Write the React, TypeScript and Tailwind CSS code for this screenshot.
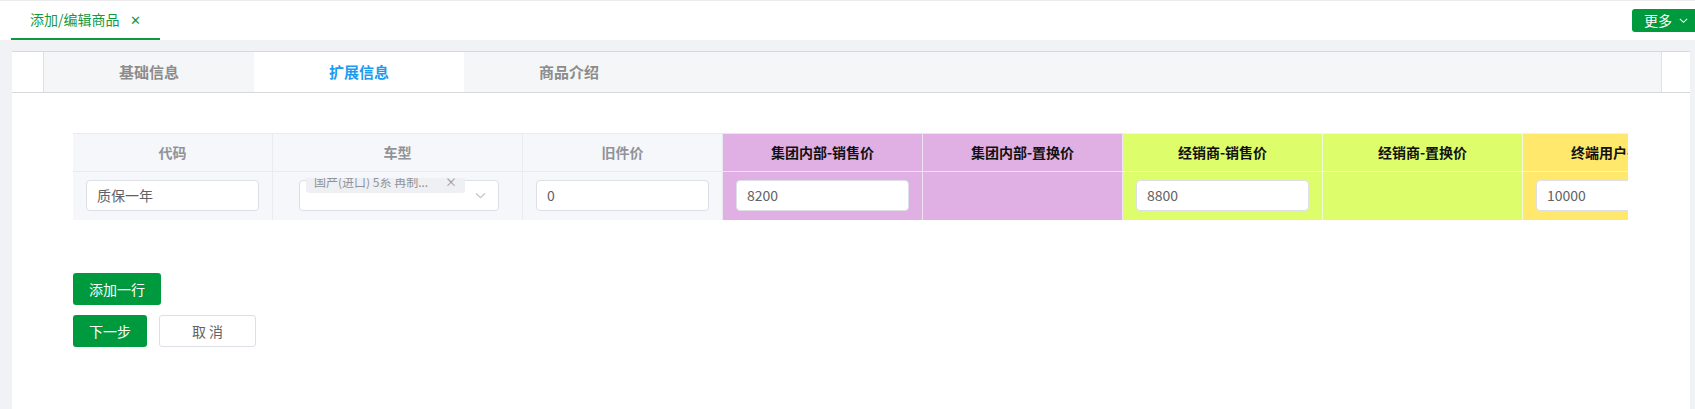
import React from "react";

const FONT = '"Noto Sans CJK SC", "Noto Sans", "Liberation Sans", sans-serif';

type Col = {
  label: string;
  width: string;
  tone: "gray" | "purple" | "lime" | "yellow";
  cell: React.ReactNode;
};

function TextInput({ value }: { value: string }) {
  return (
    <div className="h-[31px] w-full rounded-[4px] border border-[#dcdfe6] bg-white px-[10px] flex items-center text-[14px] text-[#606266]">
      {value}
    </div>
  );
}

function Chevron({ className }: { className: string }) {
  return (
    <svg viewBox="0 0 12 12" className={className} fill="none" stroke="currentColor" strokeWidth="1.1">
      <path d="M2 4.2 L6 8 L10 4.2" />
    </svg>
  );
}

function CarSelect() {
  return (
    <div className="relative h-[31px] w-[200px] ml-[26px]">
      <div className="h-full w-full rounded-[4px] border border-[#dcdfe6] bg-white flex items-center justify-end pr-[11px]">
        <Chevron className="w-[13px] h-[13px] text-[#c0c4cc]" />
      </div>
      <div className="absolute left-[7px] top-[-2px] h-[15px] w-[159px] overflow-hidden">
        <div className="-mt-[7px] h-[22px] w-[159px] rounded-[3px] bg-[#eef0f3] flex items-center pl-[8px] pr-[8px] text-[12px] text-[#909399]">
          <span className="flex-1 whitespace-nowrap">国产(进口) 5系 再制...</span>
          <span className="text-[12px] text-[#909399]">×</span>
        </div>
      </div>
    </div>
  );
}

const toneBg: Record<Col["tone"], string> = {
  gray: "bg-[#f5f7fa] border-[#e9ebf0]",
  purple: "bg-[#e0b0e4] border-[#f1e2f2]",
  lime: "bg-[#defd6b] border-[#f2fbd9]",
  yellow: "bg-[#ffe86b] border-[#fff3c4]",
};

export default function App() {
  const cols: Col[] = [
    { label: "代码", width: "w-[200px]", tone: "gray", cell: <div className="px-[13px] w-full"><TextInput value="质保一年" /></div> },
    { label: "车型", width: "w-[250px]", tone: "gray", cell: <CarSelect /> },
    { label: "旧件价", width: "w-[200px]", tone: "gray", cell: <div className="px-[13px] w-full"><TextInput value="0" /></div> },
    { label: "集团内部-销售价", width: "w-[200px]", tone: "purple", cell: <div className="px-[13px] w-full"><TextInput value="8200" /></div> },
    { label: "集团内部-置换价", width: "w-[200px]", tone: "purple", cell: null },
    { label: "经销商-销售价", width: "w-[200px]", tone: "lime", cell: <div className="px-[13px] w-full"><TextInput value="8800" /></div> },
    { label: "经销商-置换价", width: "w-[200px]", tone: "lime", cell: null },
    { label: "终端用户-销售价", width: "w-[200px]", tone: "yellow", cell: <div className="px-[13px] w-full"><TextInput value="10000" /></div> },
  ];

  return (
    <div className="w-[1695px] h-[409px] bg-[#f0f2f5] overflow-hidden flex flex-col" style={{ fontFamily: FONT }}>
      {/* top tab bar */}
      <div className="h-[40px] shrink-0 bg-white border-t border-[#ececec] flex items-stretch justify-between">
        <div className="ml-[11px] w-[149px] flex items-center pl-[19px] border-b-2 border-[#0c9a3f] text-[14px] text-[#13993f]">
          <span>添加/编辑商品</span>
          <span className="ml-[10px] text-[13px]">✕</span>
        </div>
        <div className="pt-[8px]">
          <div className="h-[23px] w-[63px] rounded-l-[3px] bg-[#009a3e] text-white text-[14px] flex items-center pl-[12px] gap-[6px]">
            <span>更多</span>
            <Chevron className="w-[11px] h-[11px] text-white" />
          </div>
        </div>
      </div>

      {/* panel */}
      <div className="mt-[11px] ml-[12px] mr-[5px] flex-1 bg-white flex flex-col">
        <div className="h-[42px] shrink-0 border-t border-b border-[#d6d8dc] flex">
          <div className="w-[31px]" />
          <div className="w-[1619px] bg-[#f5f6f8] border-l border-r border-[#dfe1e5] flex">
            <div className="w-[210px] flex items-center justify-center text-[15px] font-bold text-[#8c8c8c]">基础信息</div>
            <div className="w-[210px] bg-white flex items-center justify-center text-[15px] font-bold text-[#1b9cf0]">扩展信息</div>
            <div className="w-[210px] flex items-center justify-center text-[15px] font-bold text-[#8c8c8c]">商品介绍</div>
          </div>
        </div>

        {/* table */}
        <div className="mt-[40px] ml-[61px] w-[1555px] overflow-hidden">
          <div className="flex w-max">
            {cols.map((c, i) => (
              <div key={i} className={`${c.width} shrink-0 flex flex-col`}>
                <div
                  className={`h-[39px] border-r border-b border-t ${toneBg[c.tone]} flex items-center justify-center text-[14px] font-bold whitespace-nowrap ${
                    c.tone === "gray" ? "text-[#909399]" : "text-[#111111]"
                  }`}
                >
                  {c.label}
                </div>
                <div className={`h-[48px] border-r ${toneBg[c.tone]} flex items-center pb-[1px]`}>{c.cell}</div>
              </div>
            ))}
          </div>
        </div>

        {/* buttons */}
        <div className="ml-[61px] mt-[53px] flex flex-col gap-[10px]">
          <div className="w-[88px] h-[32px] rounded-[3px] bg-[#009a3e] text-white text-[14px] flex items-center justify-center">添加一行</div>
          <div className="flex gap-[12px]">
            <div className="w-[74px] h-[32px] rounded-[3px] bg-[#009a3e] text-white text-[14px] flex items-center justify-center">下一步</div>
            <div className="w-[97px] h-[32px] rounded-[3px] border border-[#dcdfe6] bg-white text-[#606266] text-[14px] flex items-center justify-center">取 消</div>
          </div>
        </div>
      </div>
    </div>
  );
}
